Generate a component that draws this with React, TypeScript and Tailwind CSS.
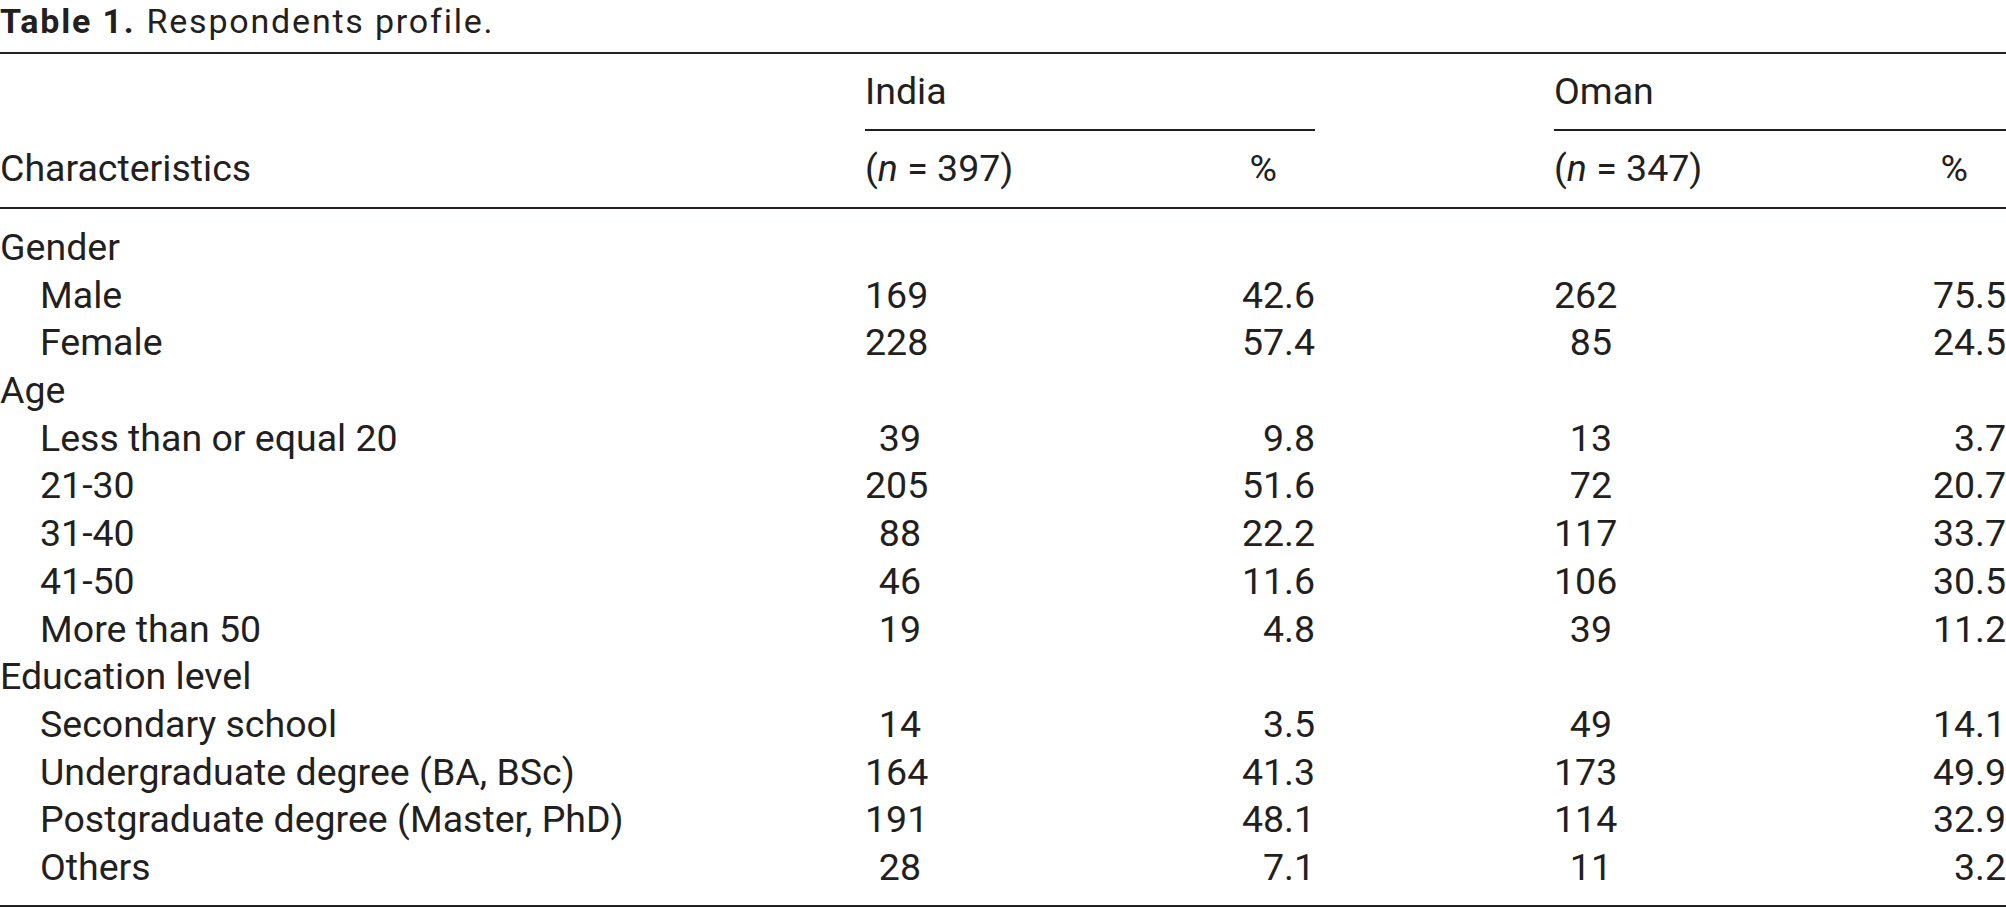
import React from "react";

type Row = { label: string; sub?: boolean; v?: [string, string, string, string] };

const rows: Row[] = [
  { label: "Gender" },
  { label: "Male", sub: true, v: ["169", "42.6", "262", "75.5"] },
  { label: "Female", sub: true, v: ["228", "57.4", "85", "24.5"] },
  { label: "Age" },
  { label: "Less than or equal 20", sub: true, v: ["39", "9.8", "13", "3.7"] },
  { label: "21-30", sub: true, v: ["205", "51.6", "72", "20.7"] },
  { label: "31-40", sub: true, v: ["88", "22.2", "117", "33.7"] },
  { label: "41-50", sub: true, v: ["46", "11.6", "106", "30.5"] },
  { label: "More than 50", sub: true, v: ["19", "4.8", "39", "11.2"] },
  { label: "Education level" },
  { label: "Secondary school", sub: true, v: ["14", "3.5", "49", "14.1"] },
  { label: "Undergraduate degree (BA, BSc)", sub: true, v: ["164", "41.3", "173", "49.9"] },
  { label: "Postgraduate degree (Master, PhD)", sub: true, v: ["191", "48.1", "114", "32.9"] },
  { label: "Others", sub: true, v: ["28", "7.1", "11", "3.2"] },
];

export default function App() {
  return (
    <div className="w-[2006px] h-[908px] bg-white text-[#231f20] font-['Roboto',sans-serif] text-[37.5px] overflow-hidden">
      {/* Caption */}
      <div className="h-[52px] pt-[1px] text-[34px] leading-[40px] whitespace-nowrap">
        <span className="font-bold tracking-[1.8px]">Table 1.</span>
        <span className="ml-[11px] tracking-[1.8px]">Respondents profile.</span>
      </div>
      <div className="h-[2px] bg-[#231f20]" />

      {/* Header */}
      <div className="grid grid-cols-[865px_450px_239px_452px] whitespace-nowrap">
        <div className="h-[75px]" />
        <div className="h-[75px] flex items-center leading-none">India</div>
        <div className="h-[75px]" />
        <div className="h-[75px] flex items-center leading-none">Oman</div>

        <div className="h-[2px]" />
        <div className="h-[2px] bg-[#231f20]" />
        <div className="h-[2px]" />
        <div className="h-[2px] bg-[#231f20]" />

        <div className="h-[76px] flex items-center leading-none">Characteristics</div>
        <div className="h-[76px] flex items-center justify-between pr-[38px] leading-none">
          <span>
            (<span className="italic">n</span> = 397)
          </span>
          <span>%</span>
        </div>
        <div className="h-[76px]" />
        <div className="h-[76px] flex items-center justify-between pr-[38px] leading-none">
          <span>
            (<span className="italic">n</span> = 347)
          </span>
          <span>%</span>
        </div>
      </div>
      <div className="h-[1.5px] bg-[#231f20]" />

      {/* Body */}
      <div className="pt-[15.5px] pb-[13px] whitespace-nowrap">
        {rows.map((r) => (
          <div key={r.label} className="flex h-[47.7px] items-center leading-[47.7px]">
            <div className={`w-[865px] ${r.sub ? "pl-[40px]" : ""}`}>{r.label}</div>
            <div className="w-[56px] text-right">{r.v?.[0]}</div>
            <div className="w-[394px] text-right">{r.v?.[1]}</div>
            <div className="w-[239px]" />
            <div className="w-[58px] text-right">{r.v?.[2]}</div>
            <div className="w-[394px] text-right">{r.v?.[3]}</div>
          </div>
        ))}
      </div>
      <div className="h-[2px] bg-[#231f20]" />
    </div>
  );
}
